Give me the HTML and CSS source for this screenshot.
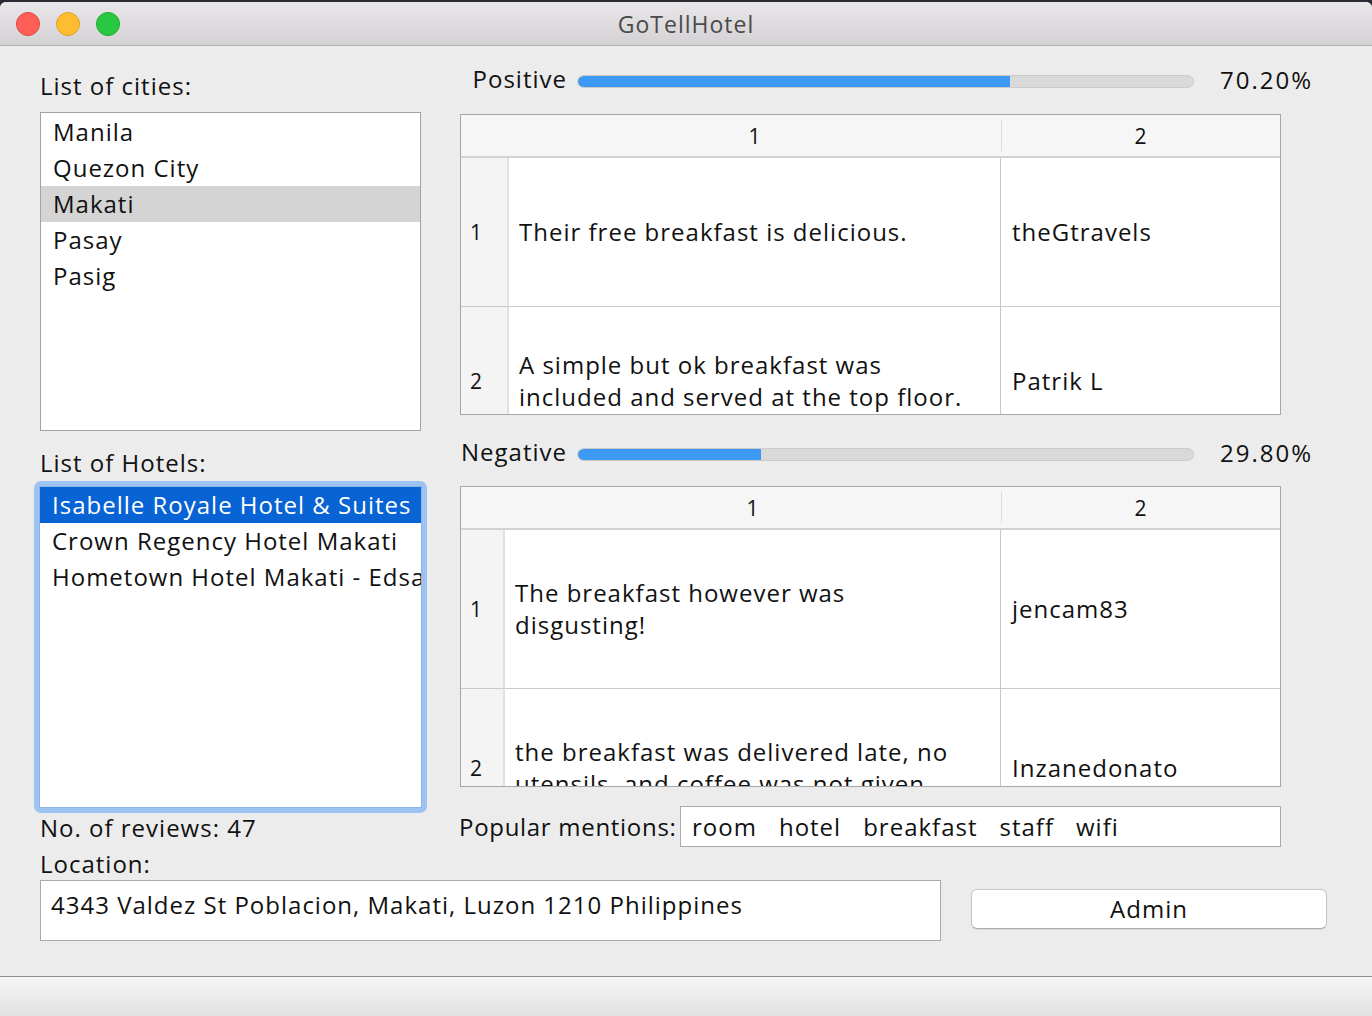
FILE: index.html
```html
<!DOCTYPE html>
<html>
<head>
<meta charset="utf-8">
<link rel="stylesheet" href="styles.css">
</head>
<body>
<div class="window">
  <div class="titlebar">
    <div class="lights">
      <span class="light red"></span>
      <span class="light yellow"></span>
      <span class="light green"></span>
    </div>
    <div class="title">GoTellHotel</div>
  </div>
  <div class="content">
    <div class="top">
      <div class="left">
        <div class="label lbl-cities">List of cities:</div>
        <ul class="list cities">
          <li>Manila</li>
          <li>Quezon City</li>
          <li class="sel-gray">Makati</li>
          <li>Pasay</li>
          <li>Pasig</li>
        </ul>
        <div class="label lbl-hotels">List of Hotels:</div>
        <div class="ring">
          <ul class="list hotels">
            <li class="sel-blue">Isabelle Royale Hotel &amp; Suites</li>
            <li>Crown Regency Hotel Makati</li>
            <li>Hometown Hotel Makati - Edsa</li>
          </ul>
        </div>
      </div>
      <div class="right">
        <div class="senti senti-pos">
          <div class="senti-label">Positive</div>
          <div class="bar"><div class="fill" style="width:70.2%"></div></div>
          <div class="pct">70.20%</div>
        </div>
        <div class="table t1">
          <div class="thead">
            <div class="hc corner"></div>
            <div class="hc">1</div>
            <div class="hc hc2">2</div>
          </div>
          <div class="tbody">
            <div class="tr">
              <div class="rh">1</div>
              <div class="td c1">Their free breakfast is delicious.</div>
              <div class="td c2">theGtravels</div>
            </div>
            <div class="tr">
              <div class="rh">2</div>
              <div class="td c1">A simple but ok breakfast was<br>included and served at the top floor.</div>
              <div class="td c2">Patrik L</div>
            </div>
          </div>
        </div>
        <div class="senti senti-neg">
          <div class="senti-label">Negative</div>
          <div class="bar"><div class="fill" style="width:29.8%"></div></div>
          <div class="pct">29.80%</div>
        </div>
        <div class="table t2">
          <div class="thead">
            <div class="hc corner"></div>
            <div class="hc">1</div>
            <div class="hc hc2">2</div>
          </div>
          <div class="tbody">
            <div class="tr">
              <div class="rh">1</div>
              <div class="td c1">The breakfast however was<br>disgusting!</div>
              <div class="td c2">jencam83</div>
            </div>
            <div class="tr">
              <div class="rh">2</div>
              <div class="td c1">the breakfast was delivered late, no<br>utensils, and coffee was not given</div>
              <div class="td c2">Inzanedonato</div>
            </div>
          </div>
        </div>
      </div>
    </div>
    <div class="row-b">
      <div class="reviews">No. of reviews: 47</div>
      <div class="mentions-label">Popular mentions:</div>
      <div class="mentions"><span>room</span><span>hotel</span><span>breakfast</span><span>staff</span><span>wifi</span></div>
    </div>
    <div class="label loc-label">Location:</div>
    <div class="row-d">
      <div class="location">4343 Valdez St Poblacion, Makati, Luzon 1210 Philippines</div>
      <button class="admin">Admin</button>
    </div>
  </div>
  <div class="footer"></div>
</div>
</body>
</html>
```

FILE: styles.css
```css
* { box-sizing: border-box; }
html, body {
  margin: 0;
  padding: 0;
}
body {
  width: 1372px;
  height: 1016px;
  overflow: hidden;
  background: #2a2a32;
  font-family: "Open Sans", "Noto Sans", "DejaVu Sans", sans-serif;
  font-size: 24px;
  letter-spacing: 1px;
  color: #111;
}
.window {
  margin-top: 2px;
  height: 1014px;
  background: #ececec;
  border-radius: 6px 6px 0 0;
  overflow: hidden;
  display: flex;
  flex-direction: column;
}
.titlebar {
  height: 44px;
  flex: none;
  background: linear-gradient(#e9e7e9, #d3d1d3);
  border-bottom: 1px solid #b3b1b3;
  display: flex;
  align-items: center;
  justify-content: center;
  position: relative;
}
.lights {
  position: absolute;
  left: 16px;
  top: 10px;
  display: flex;
  gap: 16px;
}
.light {
  width: 24px;
  height: 24px;
  border-radius: 50%;
  display: block;
}
.red { background: #fe5f57; border: 1px solid #e0443e; }
.yellow { background: #febc2e; border: 1px solid #dea123; }
.green { background: #28c840; border: 1px solid #1aab29; }
.title {
  font-size: 23px;
  color: #4a4a4a;
  margin-top: 1px;
}
.content {
  height: 930px;
  flex: none;
  padding-left: 40px;
  display: flex;
  flex-direction: column;
}
.top {
  display: flex;
  height: 767px;
  flex: none;
}
.left {
  width: 381px;
  flex: none;
  display: flex;
  flex-direction: column;
}
.left > * { flex: none; }
.label {
  height: 36px;
  line-height: 36px;
  white-space: nowrap;
}
.lbl-cities { margin-top: 22px; }
.lbl-hotels { margin-top: 14px; }
.list {
  list-style: none;
  margin: 0;
  padding: 1px 0 0 0;
  background: #fff;
  border: 1px solid #a3a3a3;
  overflow: hidden;
}
.list li {
  height: 36px;
  line-height: 35px;
  padding-left: 12px;
  white-space: nowrap;
}
.cities {
  margin-top: 8px;
  height: 319px;
}
.sel-gray { background: #d4d4d4; }
.ring {
  margin: 0 -6px;
  padding: 5px;
  background: #9cc3f1;
  border-radius: 7px;
  height: 332px;
}
.hotels {
  height: 322px;
  border: 1px solid #8cb2e6;
  padding-top: 0;
}
.sel-blue {
  background: #0863d4;
  color: #fff;
}
.right {
  margin-left: 38px;
  width: 870px;
  flex: none;
  display: flex;
  flex-direction: column;
}
.right > * { flex: none; }
.senti {
  display: flex;
  align-items: center;
  height: 36px;
}
.senti-pos { margin-top: 17px; }
.senti-neg { margin-top: 21px; }
.senti-label {
  width: 108px;
  text-align: right;
  margin-right: 10px;
  white-space: nowrap;
  line-height: 32px;
  padding-bottom: 4px;
}
.bar {
  width: 617px;
  height: 13px;
  border-radius: 7px;
  background: #d9d9d9;
  border: 1px solid #cbcbcb;
  overflow: hidden;
}
.fill {
  height: 100%;
  background: #3e99f4;
  border-radius: 7px 0 0 7px;
}
.pct {
  margin-left: 26px;
  white-space: nowrap;
  letter-spacing: 2px;
  line-height: 32px;
  padding-bottom: 2px;
}
.table {
  margin-left: 1px;
  width: 821px;
  height: 301px;
  border: 1px solid #a6a6a6;
  background: #fff;
  overflow: hidden;
  display: flex;
  flex-direction: column;
}
.t1 { margin-top: 15px; }
.t2 { margin-top: 14px; }
.thead {
  height: 43px;
  flex: none;
  display: grid;
  background: #f6f6f6;
  border-bottom: 2px solid #d2d2d2;
}
.t1 .thead, .t1 .tr { grid-template-columns: 48px 492px 1fr; }
.t2 .thead, .t2 .tr { grid-template-columns: 44px 496px 1fr; }
.hc {
  display: flex;
  align-items: center;
  justify-content: center;
  font-size: 21px;
}
.hc2 {
  border-left: 1px solid #dcdcdc;
  margin: 5px 0;
}
.tbody {
  flex: 1;
  overflow: hidden;
}
.tr {
  display: grid;
}
.t1 .tr { height: 149px; }
.t2 .tr { height: 159px; }
.rh, .td {
  border-bottom: 1px solid #c9c9c9;
  display: flex;
  align-items: center;
  white-space: nowrap;
  overflow: hidden;
}
.rh {
  background: #f4f4f4;
  border-right: 2px solid #e0e0e0;
  padding-left: 9px;
  font-size: 21px;
}
.td {
  line-height: 32px;
}
.c1 {
  padding-left: 10px;
  border-right: 1px solid #c9c9c9;
}
.c2 {
  padding-left: 11px;
}
.row-b {
  display: flex;
  align-items: center;
  height: 41px;
  margin-top: -7px;
  flex: none;
}
.reviews {
  width: 419px;
  flex: none;
  white-space: nowrap;
  padding-top: 2px;
}
.mentions-label {
  white-space: nowrap;
  width: 221px;
  flex: none;
  letter-spacing: 0.7px;
}
.mentions {
  width: 601px;
  height: 41px;
  background: #fff;
  border: 1px solid #a9a9a9;
  display: flex;
  align-items: center;
  padding-left: 11px;
  white-space: nowrap;
}
.mentions span { margin-right: 22px; }
.loc-label {
  height: 33px;
  line-height: 34px;
  flex: none;
}
.row-d {
  display: flex;
  align-items: flex-start;
  flex: none;
}
.location {
  width: 901px;
  height: 61px;
  background: #fff;
  border: 1px solid #a9a9a9;
  padding: 6px 0 0 10px;
  line-height: 36px;
  white-space: nowrap;
}
.admin {
  margin-left: 30px;
  margin-top: 9px;
  width: 356px;
  height: 40px;
  background: #fff;
  border: 1px solid #c6c6c6;
  border-bottom-color: #adadad;
  border-radius: 6px;
  box-shadow: 0 1px 1px rgba(0,0,0,0.08);
  font-family: inherit;
  font-size: 24px;
  letter-spacing: 1px;
  color: #111;
  padding: 0 0 2px 0;
}
.footer {
  flex: 1;
  border-top: 1px solid #8e8e8e;
  background: linear-gradient(#f6f6f6, #e1e1e1);
}
```
